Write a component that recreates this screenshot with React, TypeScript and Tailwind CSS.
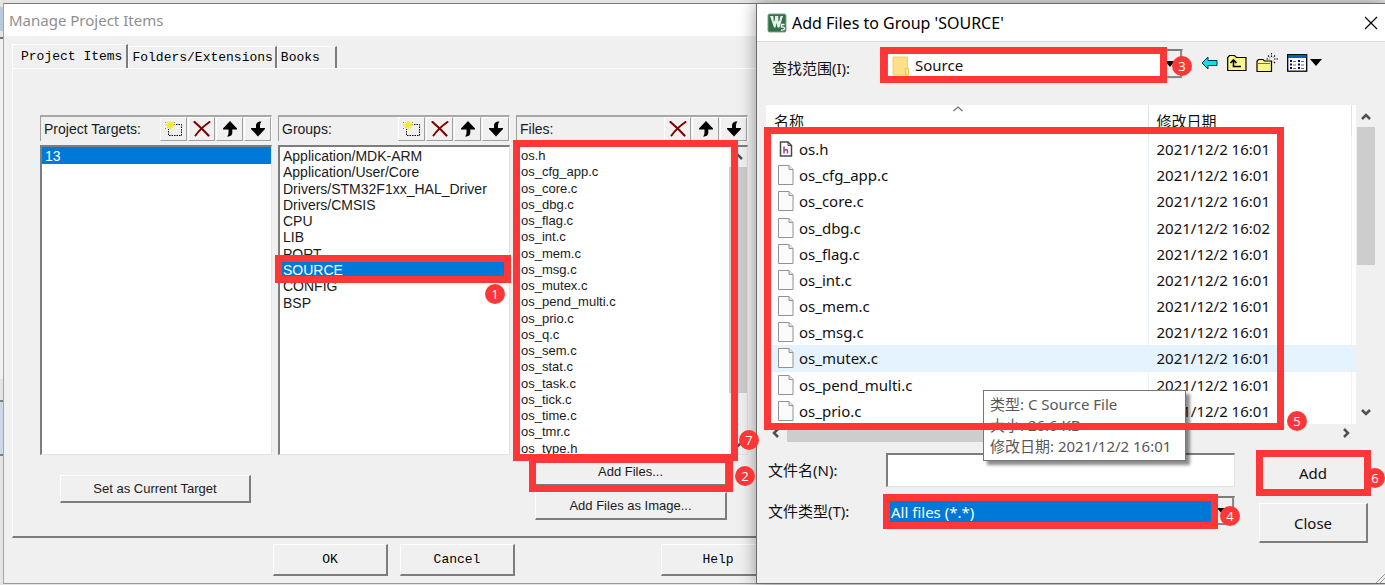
import { useState } from "react";
import type { ReactNode } from "react";
import clsx from "clsx";

const raised =
  "border-t border-l border-r-2 border-b-2 border-t-white border-l-white border-r-[#7d7d7d] border-b-[#7d7d7d] bg-[#f0f0f0]";
const sunken =
  "border-t-2 border-l-2 border-r border-b border-t-[#7d7d7d] border-l-[#7d7d7d] border-r-[#e3e3e3] border-b-[#e3e3e3] bg-white";
const mono = "font-['Liberation_Mono',monospace] text-[13px] leading-4";
const arial = "font-['Liberation_Sans',sans-serif]";

const groups = [
  "Application/MDK-ARM",
  "Application/User/Core",
  "Drivers/STM32F1xx_HAL_Driver",
  "Drivers/CMSIS",
  "CPU",
  "LIB",
  "PORT",
  "SOURCE",
  "CONFIG",
  "BSP",
];

const files = [
  "os.h",
  "os_cfg_app.c",
  "os_core.c",
  "os_dbg.c",
  "os_flag.c",
  "os_int.c",
  "os_mem.c",
  "os_msg.c",
  "os_mutex.c",
  "os_pend_multi.c",
  "os_prio.c",
  "os_q.c",
  "os_sem.c",
  "os_stat.c",
  "os_task.c",
  "os_tick.c",
  "os_time.c",
  "os_tmr.c",
  "os_type.h",
];

const folder = files.slice(0, 11).map((name) => ({
  name,
  date: name === "os_dbg.c" ? "2021/12/2 16:02" : "2021/12/2 16:01",
}));

/* ---------- annotations ---------- */

function Frame({ className }: { className: string }) {
  return <span className={clsx("pointer-events-none absolute z-20 border-[7px] border-[#fd3737]", className)} />;
}

function Badge({ n, className }: { n: number; className: string }) {
  return (
    <span
      className={clsx(
        "pointer-events-none absolute z-30 flex h-5 w-5 items-center justify-center rounded-full bg-[#fd3737] font-['Open_Sans',sans-serif] text-[13px] leading-5 text-white",
        className
      )}
    >
      {n}
    </span>
  );
}

/* ---------- icons ---------- */

function NewIcon() {
  return (
    <svg width="18" height="16" viewBox="0 0 18 16" fill="none">
      <rect x="3.500" y="3.500" width="13" height="11" stroke="#000" strokeDasharray="1.5 1" />
      <path d="M0 0h8v8H0z" fill="#f0f0f0" />
      <path d="M5 0v9M0 4h10M2 1l6 6M8 1L2 7" stroke="#f2ea1c" strokeWidth="1.400" />
      <path d="M0 1l1 1M9 2l1-1M0 8l1-1" stroke="#8a8a50" />
    </svg>
  );
}

function DeleteIcon() {
  return (
    <svg width="18" height="16" viewBox="0 0 18 16" fill="none" stroke="#800000" strokeLinecap="round">
      <path d="M1.5 1C5 4 11 9.500 15.500 14.500" strokeWidth="2.200" />
      <path d="M16.500 1C11.500 4.500 6 9.500 2.500 14.500" strokeWidth="2" />
    </svg>
  );
}

function UpIcon() {
  return (
    <svg width="14" height="16" viewBox="0 0 14 16">
      <path d="M7 0L14 7.500V8.500H9.300V12Q9 15 5.500 15.500H4Q5.500 14 5.500 12V8.500H0V7.500Z" />
    </svg>
  );
}

function DownIcon() {
  return (
    <svg width="14" height="16" viewBox="0 0 14 16">
      <path d="M7 15.500L14 8V7H9V4.500Q9 2 10.500.5H8.500Q5.500 1 5 4V7H0V8Z" />
    </svg>
  );
}

function Chevron({ d, className }: { d: string; className?: string }) {
  return (
    <svg width="12" height="12" viewBox="0 0 12 12" fill="none" className={className}>
      <path d={d} stroke="#505050" strokeWidth="2.500" />
    </svg>
  );
}

const UP = "M2 8L6 4L10 8";
const DOWN = "M2 4L6 8L10 4";
const LEFT = "M8 2L4 6L8 10";
const RIGHT = "M4 2L8 6L4 10";

function AppIcon() {
  return (
    <svg width="20" height="20" viewBox="0 0 20 20" fill="none">
      <rect x="1" y="1" width="18" height="18" rx="1.500" fill="#2f7048" stroke="#7ea68a" />
      <path d="M3 3h3.500l1.500 6V3h3.500v6l2-6H16l-3.500 11.500h-2L9.500 10l-1 4.500H7Z" fill="#e4efe6" />
      <path d="M7 3v5M12 3v5" stroke="#2f7048" strokeWidth=".8" />
      <path d="M17.500 11.500H14.500v2.500q3-.3 3 1.500t-3.500 1.500" stroke="#fff" strokeWidth="1.300" />
    </svg>
  );
}

function FolderIcon() {
  return (
    <svg width="18" height="20" viewBox="0 0 18 20">
      <path d="M1 1h14.500v18H1z" fill="#ffe08a" stroke="#f3cc60" />
      <path d="M13.500 12.500h3V19h-3z" fill="#ffe9a8" stroke="#eec04c" />
    </svg>
  );
}

function PageIcon() {
  return (
    <svg width="16" height="20" viewBox="0 0 16 20" fill="#fbfbfb" stroke="#929292">
      <path d="M.5.5h10.500l4 4v15H.5z" />
      <path d="M11 .5v4h4" fill="#e6e6e6" />
    </svg>
  );
}

function HeaderIcon() {
  return (
    <svg width="16" height="20" viewBox="0 0 16 20" fill="none">
      <path d="M2.500 3h7.500l3.500 3.500V17h-11z" fill="#fff" stroke="#484848" strokeWidth="1.500" />
      <path d="M10 3v3.500h3.500" stroke="#484848" />
      <path d="M6 7.500v7M6 11.500q3.500-2 3.500.5v2.500" stroke="#9b4f96" strokeWidth="1.600" />
    </svg>
  );
}

function BackIcon() {
  return (
    <svg width="17" height="14" viewBox="0 0 17 14">
      <path d="M1 7L7 1V4.500H16V9.500H7V13Z" fill="#00e4ee" stroke="#10333a" />
    </svg>
  );
}

function ParentIcon() {
  return (
    <svg width="20" height="18" viewBox="0 0 20 18" fill="none" stroke="#000">
      <path d="M.7 16.500V3.500L2.500 1.500H7.500L9.500 3.500H19V16.500Z" fill="#fbf68a" strokeWidth="1.200" />
      <path d="M6.500 6.500V12.500H14M3.500 9L6.500 6L9.500 9" strokeWidth="1.600" />
    </svg>
  );
}

function NewFolderIcon() {
  return (
    <svg width="22" height="20" viewBox="0 0 22 20" fill="none" stroke="#000">
      <path d="M1 18.500V8L2.500 6.500H7L8.500 8H15.500V18.500Z" fill="#fbf68a" strokeWidth="1.200" />
      <path d="M1 10.500h13" stroke="#77752f" />
      <path d="M15.500 0v4M15.500 8v4M10.500 6h3M18 6h4M12 2.500l2 2M19 2.500l-2 2M19 10l-2-2" strokeWidth="1.100" strokeDasharray="1.5 1" />
    </svg>
  );
}

function ViewIcon() {
  return (
    <svg width="36" height="18" viewBox="0 0 36 18">
      <rect x=".7" y=".7" width="19" height="16.500" fill="#fff" stroke="#000" strokeWidth="1.300" />
      <path d="M1 1h18.500v3H1z" fill="#0a5bb8" />
      <path d="M3 7h2M11 7h2M3 10.500h2M11 10.500h2M3 14h2M11 14h2" stroke="#0000a8" strokeWidth="2" />
      <path d="M6 7.500h3M14 7.500h3M6 11h3M14 11h3M6 14.500h3M14 14.500h3" stroke="#707070" />
      <path d="M23 5h12l-6 7z" />
    </svg>
  );
}

/* ---------- project items window ---------- */

function ToolButton({ label, children }: { label: string; children: ReactNode }) {
  return (
    <button
      aria-label={label}
      className="flex h-6 w-[27px] items-center justify-center border-t border-r border-b border-l border-t-white border-r-[#a0a0a0] border-b-[#a0a0a0] border-l-white"
    >
      {children}
    </button>
  );
}

function ColumnHeader({ title, canAdd = true }: { title: string; canAdd?: boolean }) {
  return (
    <div className="mb-1 flex h-[26px] items-center border-t-2 border-r border-l border-t-[#a8a8a8] border-r-white border-l-[#a0a0a0] pl-[3px]">
      <h2 className="flex-1 text-[14px] leading-4">{title}</h2>
      <div className="flex gap-px">
        {canAdd && (
          <ToolButton label="New">
            <NewIcon />
          </ToolButton>
        )}
        <ToolButton label="Delete">
          <DeleteIcon />
        </ToolButton>
        <ToolButton label="Move up">
          <UpIcon />
        </ToolButton>
        <ToolButton label="Move down">
          <DownIcon />
        </ToolButton>
      </div>
    </div>
  );
}

function ProjectItems() {
  const [tab, setTab] = useState("Project Items");

  return (
    <section className="flex flex-col border-t border-b border-l border-t-[#7a7a7a] border-b-[#9a9a9a] border-l-[#a5a5a5] bg-[#f0f0f0]">
      <h1 className="h-8 bg-white pl-[5px] font-['Noto_Sans',sans-serif] text-[15px] leading-8 text-[#8f8f8f]">
        Manage Project Items
      </h1>

      <div role="tablist" className={clsx("mt-2 ml-2 flex h-6 items-end", mono)}>
        {["Project Items", "Folders/Extensions", "Books"].map((name) => (
          <button
            key={name}
            role="tab"
            aria-selected={tab === name}
            onClick={() => setTab(name)}
            className={clsx(
              "border-t border-r-2 border-l border-t-white border-r-[#7d7d7d] border-l-white text-left",
              tab === name ? "h-6 pr-1 pl-2" : "h-[22px] pr-0.5 pl-[3px]",
              name === "Books" && "w-[60px]"
            )}
          >
            {name}
          </button>
        ))}
      </div>

      <div
        role="tabpanel"
        className={clsx(
          "ml-2 flex-1 border-t border-b-2 border-l border-t-white border-b-[#7d7d7d] border-l-white pt-[46px] pr-2 pb-4 pl-[27px]",
          arial
        )}
      >
        <div className="grid grid-cols-3 gap-x-1.5 text-[14px] leading-4 text-[#1a1a1a]">
          <div>
            <ColumnHeader title="Project Targets:" />
            <ul className={clsx("h-[310px]", sunken)}>
              <li className="h-[17px] bg-[#0078d7] pl-[3px] leading-[18px] text-white">13</li>
            </ul>
            <button className={clsx("mt-5 ml-5 h-7 w-[191px] text-[13px]", raised)}>Set as Current Target</button>
          </div>

          <div>
            <ColumnHeader title="Groups:" />
            <div className={clsx("h-[310px]", sunken)}>
              <ul className="grid h-[163px] auto-rows-fr">
                {groups.map((name) => (
                  <li
                    key={name}
                    className={clsx("pl-[3px] leading-[18px]", name === "SOURCE" && "relative bg-[#0078d7] text-white")}
                  >
                    {name}
                    {name === "SOURCE" && (
                      <>
                        <Frame className="-inset-y-[6px] -right-0.5 -left-[5px]" />
                        <Badge n={1} className="top-[23px] right-1" />
                      </>
                    )}
                  </li>
                ))}
              </ul>
            </div>
          </div>

          <div>
            <ColumnHeader title="Files:" canAdd={false} />
            <div className={clsx("relative flex h-[310px]", sunken)}>
              <ul className="grid h-[309px] flex-1 auto-rows-fr overflow-hidden text-[13px]">
                {files.map((name) => (
                  <li key={name} className="pl-[3px] leading-[18px]">
                    {name}
                  </li>
                ))}
              </ul>
              <div className="flex w-[18px] flex-col items-center justify-between bg-[#f0f0f0] py-1">
                <Chevron d={UP} />
                <div className="mt-1 mb-auto h-[226px] w-full bg-[#cdcdcd]" />
                <Chevron d={DOWN} />
              </div>
              <Frame className="-top-[7px] right-[9px] -bottom-[7px] -left-[5px]" />
              <Badge n={7} className="-right-3 bottom-1" />
            </div>
            <div className="mt-[3px] ml-[19px] flex w-[192px] flex-col gap-1.5 text-[13px]">
              <div className="relative">
                <button className={clsx("h-7 w-full", raised)}>Add Files...</button>
                <Frame className="-inset-x-[6px] -top-0.5 -bottom-1.5" />
                <Badge n={2} className="top-2 -right-7" />
              </div>
              <button className={clsx("h-7", raised)}>Add Files as Image...</button>
            </div>
          </div>
        </div>
      </div>

      <div className={clsx("mt-1.5 mb-[7px] flex pl-[269px]", mono)}>
        <button className={clsx("h-8 w-[115px]", raised)}>OK</button>
        <button className={clsx("ml-3 h-8 w-[115px]", raised)}>Cancel</button>
        <button className={clsx("-mr-5 ml-auto h-8 w-[115px]", raised)}>Help</button>
      </div>
    </section>
  );
}

/* ---------- file picker window ---------- */

function Combo({
  id,
  value,
  className,
  selectClass,
  children,
}: {
  id: string;
  value: string;
  className: string;
  selectClass: string;
  children?: ReactNode;
}) {
  return (
    <div className={clsx("relative", sunken, className)}>
      <select id={id} className={clsx("h-full w-full appearance-none text-[15px] leading-5 outline-none", selectClass)}>
        <option>{value}</option>
      </select>
      <span className="pointer-events-none absolute inset-y-0 right-0 flex w-[22px] items-center justify-center border-r-2 border-b-2 border-[#8a8a8a] bg-[#f0f0f0]">
        <svg width="10" height="6" viewBox="0 0 10 6">
          <path d="M0 0h10L5 6z" />
        </svg>
      </span>
      {children}
    </div>
  );
}

function FileTable() {
  return (
    <div className="relative ml-[9px] pr-[9px]">
      <div className="flex h-[319px]">
        <div className="flex-1 overflow-hidden bg-white">
          <table className="h-full w-full table-fixed border-collapse text-left text-[15px] leading-5">
            <colgroup>
              <col />
              <col className="w-[203px]" />
              <col className="w-[5px]" />
            </colgroup>
            <thead>
              <tr className="h-[31px]">
                <th className="pl-2 font-normal">名称</th>
                <th className="border-x border-[#e2e2e2] pl-2 font-normal">修改日期</th>
                <th></th>
              </tr>
            </thead>
            <tbody>
              {folder.map((row) => (
                <tr key={row.name} className={clsx("h-[26px]", row.name === "os_mutex.c" && "bg-[#e5f3ff]")}>
                  <td className="pl-3">
                    <span className="flex items-center gap-[5px]">
                      {row.name === "os.h" ? <HeaderIcon /> : <PageIcon />}
                      {row.name}
                    </span>
                  </td>
                  <td className="border-x border-[#e8f3fa] pl-2">{row.date}</td>
                  <td></td>
                </tr>
              ))}
            </tbody>
          </table>
        </div>
        <div className="flex w-5 flex-col items-center justify-between py-1.5">
          <Chevron d={UP} />
          <div className="mt-1 mb-auto h-[138px] w-[18px] bg-[#cdcdcd]" />
          <Chevron d={DOWN} />
        </div>
      </div>
      <div className="mr-5 flex h-[18px] items-center pr-1 pl-1">
        <Chevron d={LEFT} />
        <div className="ml-[5px] h-full w-[300px] bg-[#cdcdcd]" />
        <Chevron d={RIGHT} className="ml-auto" />
      </div>

      <svg width="10" height="6" viewBox="0 0 10 6" fill="none" stroke="#707070" className="absolute top-px left-[187px]">
        <path d="M.5 5L5 1L9.500 5" strokeWidth="1.300" />
      </svg>

      <div
        role="tooltip"
        className="absolute top-[285px] left-[217px] z-10 w-[203px] border border-[#767676] bg-white py-[3px] pl-1.5 text-[15px] leading-[21px] whitespace-nowrap text-[#575757] shadow-[4px_4px_3px_rgba(0,0,0,0.45)]"
      >
        <p>类型: C Source File</p>
        <p>大小: 26.6 KB</p>
        <p>修改日期: 2021/12/2 16:01</p>
      </div>

      <Frame className="top-[22px] right-[101px] bottom-3 -left-0.5" />
      <Badge n={5} className="right-[78px] bottom-[11px]" />
    </div>
  );
}

function AddFiles() {
  return (
    <section className="relative z-10 flex flex-col border-t border-b border-l border-[#6b6b6b] bg-[#f0f0f0] font-['Noto_Sans','Noto_Sans_CJK_SC',sans-serif] text-[#111] shadow-[0_0_16px_rgba(0,0,0,0.4)]">
      <div className="flex h-[38px] items-center border-b border-[#d9d9d9] bg-white pr-[7px] pl-2.5">
        <AppIcon />
        <h1 className="ml-[5px] flex-1 text-[16px] leading-5 text-black">Add Files to Group 'SOURCE'</h1>
        <button aria-label="Close window">
          <svg width="14" height="14" viewBox="0 0 14 14" stroke="#000" strokeWidth="1.200">
            <path d="M1 1L13 13M13 1L1 13" />
          </svg>
        </button>
      </div>

      <div className="mb-[19px] flex h-11 items-center pr-[62px] pl-[15px]">
        <label htmlFor="look-in" className="w-[114px] pt-2 text-[15px] leading-5">
          查找范围(I):
        </label>
        <Combo id="look-in" value="Source" className="h-[30px] flex-1" selectClass="pl-[27px]">
          <span className="pointer-events-none absolute top-[5px] left-1">
            <FolderIcon />
          </span>
          <Frame className="-top-1 right-[15px] -bottom-[5px] -left-2" />
          <Badge n={3} className="top-[5px] -right-2.5" />
        </Combo>
        <div className="ml-[18px] flex items-center gap-[9px] pb-0.5">
          <button aria-label="Back">
            <BackIcon />
          </button>
          <button aria-label="Up one level">
            <ParentIcon />
          </button>
          <button aria-label="New folder">
            <NewFolderIcon />
          </button>
          <button aria-label="View menu">
            <ViewIcon />
          </button>
        </div>
      </div>

      <FileTable />

      <form className="mt-[11px] flex gap-6 pr-[17px] pl-[11px]" onSubmit={(e) => e.preventDefault()}>
        <div className="flex flex-1 flex-col gap-[9px]">
          <div className="flex items-center">
            <label htmlFor="file-name" className="w-[118px] text-[15px] leading-5">
              文件名(N):
            </label>
            <input id="file-name" type="text" className={clsx("h-[34px] min-w-0 flex-1 px-1 text-[15px] outline-none", sunken)} />
          </div>
          <div className="flex items-center">
            <label htmlFor="file-type" className="w-[118px] text-[15px] leading-5">
              文件类型(T):
            </label>
            <Combo id="file-type" value="All files (*.*)" className="h-[30px] flex-1" selectClass="bg-[#0078d7] pl-[3px] text-white">
              <Frame className="-top-1 right-[16px] -bottom-1 -left-[5px]" />
              <Badge n={4} className="top-2 -right-1.5" />
            </Combo>
          </div>
        </div>
        <div className="flex w-[109px] flex-col gap-2.5 text-[15px] leading-5">
          <div className="relative">
            <button className={clsx("h-10 w-full", raised)}>Add</button>
            <Frame className="-inset-x-[3px] -inset-y-[3px]" />
            <Badge n={6} className="top-[15px] -right-[17px]" />
          </div>
          <button type="button" className={clsx("h-10", raised)}>
            Close
          </button>
        </div>
      </form>

      <svg width="10" height="10" viewBox="0 0 10 10" stroke="#9a9a9a" className="mt-auto ml-auto">
        <path d="M1 10L10 1M5 10L10 5" />
      </svg>
    </section>
  );
}

export default function App() {
  return (
    <main className="grid min-h-screen grid-cols-[3px_753fr_629fr] overflow-hidden bg-[#e4e4e4] pt-[3px] pb-px">
      <div className="flex flex-col">
        <div className="mt-1 h-6 bg-[#b9c9dc]" />
        <div className="mt-1.5 h-0.5 bg-[#707070]" />
        <div className="mb-auto h-[340px] bg-[#f2f2f2]" />
        <div className="mb-32 h-14 border-y-2 border-[#808080] bg-[#cdd8e6]" />
      </div>
      <ProjectItems />
      <AddFiles />
    </main>
  );
}
